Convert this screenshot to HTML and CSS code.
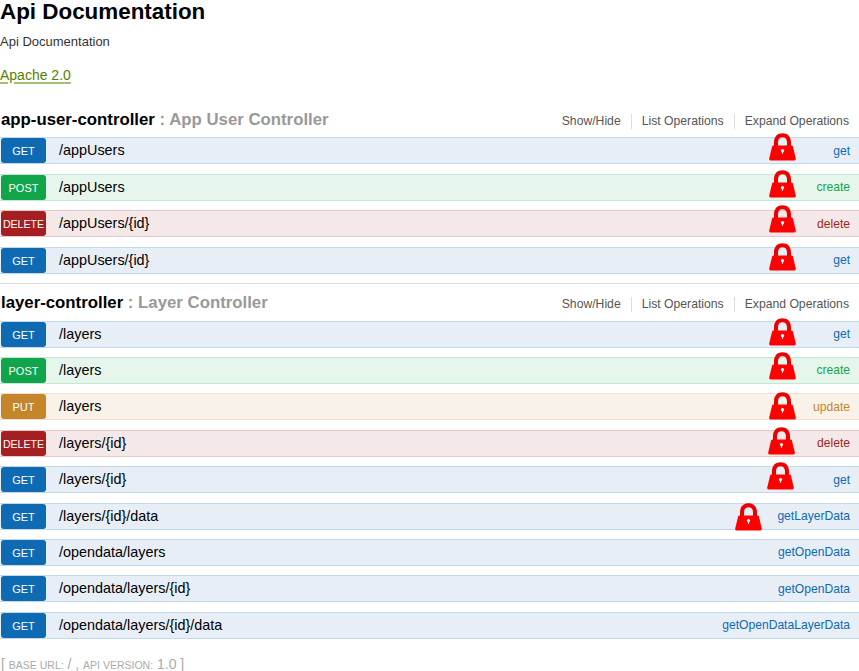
FILE: index.html
```html
<!DOCTYPE html>
<html lang="en">
<head>
  <meta charset="UTF-8">
  <title>Api Documentation</title>
  <link rel="stylesheet" href="styles.css">
</head>
<body>
  <svg class="icon-defs" width="0" height="0">
    <symbol id="lock" viewBox="0 0 27 28">
      <path d="M5 13V9.5C5 3.5 8.5 .3 13.5 .3S22 3.5 22 9.5V13H18V9.5C18 6 16.2 4.2 13.5 4.2S9 6 9 9.5V13Z" fill="#ec0000"/>
      <path d="M4.5 12.5H22.5Q23.6 12.5 23.9 13.5L26.8 25.5Q27.1 27.6 25 27.6H2Q-.1 27.6 .2 25.5L3.1 13.5Q3.4 12.5 4.5 12.5Z" fill="#f00"/>
      <circle cx="13.5" cy="17.6" r="1.6" fill="#fff"/>
      <rect x="12.9" y="18" width="1.2" height="2.7" fill="#fff"/>
    </symbol>
  </svg>

  <header class="info">
    <h1>Api Documentation</h1>
    <p class="info-desc">Api Documentation</p>
    <a class="info-license" href="#">Apache 2.0</a>
  </header>

  <section class="resource first">
    <div class="resource-head">
      <h2><b>app-user-controller</b><span class="resource-sep"> : App User Controller</span></h2>
      <ul class="resource-links">
        <li>Show/Hide</li>
        <li>List Operations</li>
        <li>Expand Operations</li>
      </ul>
    </div>
    <div class="op get"><span class="verb">GET</span><span class="path">/appUsers</span><span class="name">get</span><svg class="lock lock-a"><use href="#lock"/></svg></div>
    <div class="op post"><span class="verb">POST</span><span class="path">/appUsers</span><span class="name">create</span><svg class="lock lock-a"><use href="#lock"/></svg></div>
    <div class="op delete"><span class="verb">DELETE</span><span class="path">/appUsers/{id}</span><span class="name">delete</span><svg class="lock lock-b"><use href="#lock"/></svg></div>
    <div class="op get"><span class="verb">GET</span><span class="path">/appUsers/{id}</span><span class="name">get</span><svg class="lock lock-a"><use href="#lock"/></svg></div>
  </section>

  <section class="resource">
    <div class="resource-head">
      <h2><b>layer-controller</b><span class="resource-sep"> : Layer Controller</span></h2>
      <ul class="resource-links">
        <li>Show/Hide</li>
        <li>List Operations</li>
        <li>Expand Operations</li>
      </ul>
    </div>
    <div class="op get"><span class="verb">GET</span><span class="path">/layers</span><span class="name">get</span><svg class="lock lock-d"><use href="#lock"/></svg></div>
    <div class="op post"><span class="verb">POST</span><span class="path">/layers</span><span class="name">create</span><svg class="lock lock-b"><use href="#lock"/></svg></div>
    <div class="op put"><span class="verb">PUT</span><span class="path">/layers</span><span class="name">update</span><svg class="lock lock-c"><use href="#lock"/></svg></div>
    <div class="op delete"><span class="verb">DELETE</span><span class="path">/layers/{id}</span><span class="name">delete</span><svg class="lock lock-e"><use href="#lock"/></svg></div>
    <div class="op get"><span class="verb">GET</span><span class="path">/layers/{id}</span><span class="name">get</span><svg class="lock lock-f"><use href="#lock"/></svg></div>
    <div class="op get"><span class="verb">GET</span><span class="path">/layers/{id}/data</span><span class="name">getLayerData</span><svg class="lock lock-wide"><use href="#lock"/></svg></div>
    <div class="op get"><span class="verb">GET</span><span class="path">/opendata/layers</span><span class="name">getOpenData</span></div>
    <div class="op get"><span class="verb">GET</span><span class="path">/opendata/layers/{id}</span><span class="name">getOpenData</span></div>
    <div class="op get"><span class="verb">GET</span><span class="path">/opendata/layers/{id}/data</span><span class="name">getOpenDataLayerData</span></div>
  </section>

  <footer class="api-meta">[ <span class="meta-label">Base URL:</span> <span class="meta-val">/</span> , <span class="meta-label">Api Version:</span> <span class="meta-val">1.0</span> ]</footer>
</body>
</html>
```

FILE: styles.css
```css
/* Base */
body {
  font-family: "Liberation Sans", Arial, sans-serif;
  margin: 0;
  padding: 0;
  background: #fff;
  color: #000;
  overflow: hidden;
}
.icon-defs {
  position: absolute;
}

/* Info block */
.info {
  height: 100.8px;
}
.info h1 {
  margin: 0;
  font-size: 22.4px;
  line-height: 24px;
  font-weight: bold;
}
.info-desc {
  margin: 10px 0 0;
  font-size: 13px;
  line-height: 16px;
  color: #333;
}
.info-license {
  display: inline-block;
  margin-top: 17px;
  font-size: 14px;
  line-height: 16px;
  color: #547f00;
  text-decoration-color: #a3bd78;
  text-decoration-thickness: 2px;
  text-underline-offset: 2px;
}

/* Resource groups */
.resource {
  border-top: 1px solid #ddd;
}
.resource.first {
  border-top: 0;
}
.resource-head {
  display: flex;
  justify-content: space-between;
  align-items: center;
  height: 36.6px;
  padding-right: 10px;
}
.resource-head h2 {
  margin: 2px 0 0;
  padding-left: 1px;
  font-size: 16.8px;
  line-height: 20px;
  font-weight: bold;
  color: #999;
}
.resource-head h2 b {
  color: #000;
}
.resource-links {
  display: flex;
  margin: 4px 0 0;
  padding: 0;
  list-style: none;
  font-size: 12.2px;
  line-height: 15px;
  color: #555;
}
.resource-links li {
  padding: 0 10px;
  border-right: 1px solid #ddd;
}
.resource-links li:last-child {
  padding-right: 0;
  border-right: 0;
}

/* Operation rows */
.op {
  position: relative;
  display: flex;
  align-items: center;
  box-sizing: border-box;
  height: 27px;
  margin-bottom: 9.4px;
  padding: 0 9px 0 1px;
  border-top: 1px solid;
  border-bottom: 1px solid;
  font-size: 14.4px;
}
.verb {
  width: 45px;
  height: 25px;
  margin-right: 13px;
  border-radius: 3px;
  color: #fff;
  font-size: 11px;
  line-height: 27px;
  text-align: center;
}
.path {
  flex: 1;
  line-height: 18px;
  margin-top: -1px;
}
.name {
  font-size: 12.1px;
}
.get { background: #e7eef6; border-color: #c3d9ec; }
.get .verb { background: #0f6ab4; }
.get .name { color: #0f6ab4; }
.post { background: #e7f6ec; border-color: #c3e8d1; }
.post .verb { background: #10a54a; }
.post .name { color: #10a54a; }
.put { background: #f9f2e9; border-color: #f0e0ca; }
.put .verb { background: #c5862b; }
.put .name { color: #c5862b; }
.delete { background: #f5e8e8; border-color: #e8c6c7; }
.delete .verb { background: #a41e22; font-size: 10.6px; }
.delete .name { color: #a41e22; }

/* Lock badge, its offset differs a little per row */
.lock {
  position: absolute;
  right: 63px;
  width: 27px;
  height: 28px;
}
.lock-a { top: -5px; }
.lock-b { top: -6px; }
.lock-c { top: -2px; }
.lock-d { top: -4px; }
.lock-e { top: -4px; right: 64px; }
.lock-f { top: -5.5px; right: 65px; }
.lock-wide { top: -1px; right: 97px; }

/* Footer */
.api-meta {
  margin-top: 18.5px;
  padding-left: 1px;
  font-size: 14px;
  line-height: 14px;
  color: #aaa;
}
.meta-label {
  text-transform: uppercase;
  font-size: 10.5px;
}
.meta-val {
  font-size: 14px;
}
```
